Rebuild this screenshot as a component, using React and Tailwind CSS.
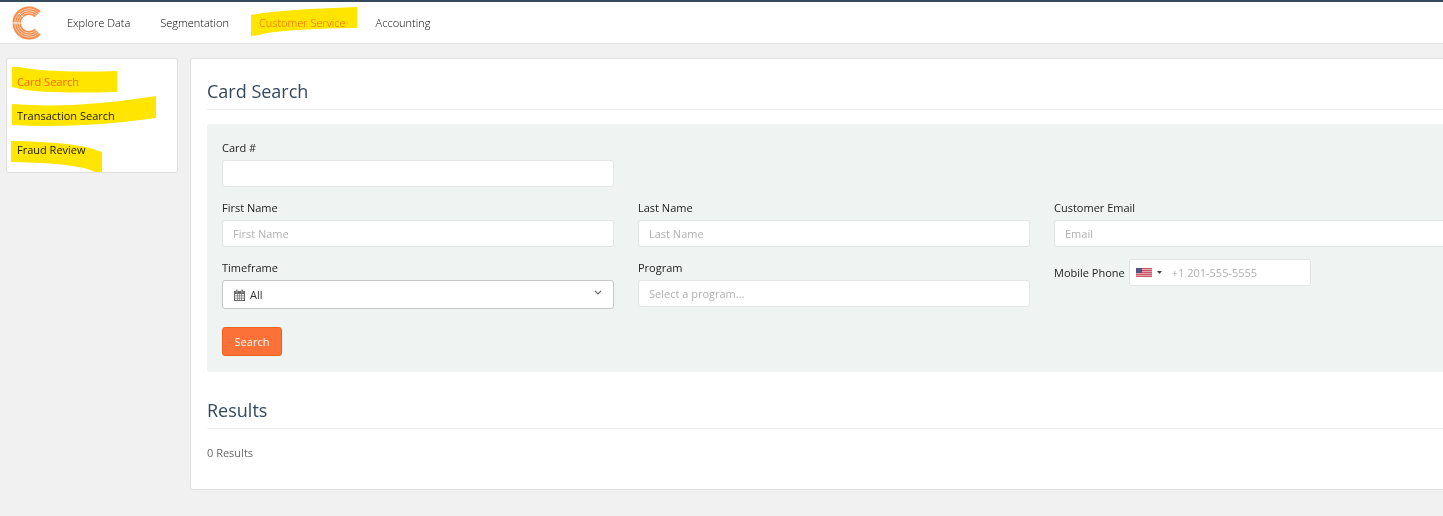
import React from "react";

const marker = "pointer-events-none absolute mix-blend-multiply";

function Logo() {
  const arc = (r) => {
    const d = r * Math.SQRT1_2;
    return `M${17 + d} ${17 - d}A${r} ${r} 0 1 0 ${17 + d} ${17 + d}`;
  };
  return (
    <svg viewBox="0 0 34 34" className="size-[34px]" fill="none" aria-hidden="true">
      <path d={arc(12.3)} stroke="#f98a48" strokeWidth="8.400" />
      <path d={arc(14.3)} stroke="#fff" strokeWidth="0.6" />
      <path d={arc(12.2)} stroke="#fff" strokeWidth="0.6" />
      <path d={arc(10.1)} stroke="#fff" strokeWidth="0.6" />
      <path d="M0 17H10M7 7L11 11" stroke="#fff" strokeWidth="0.9" />
    </svg>
  );
}

function Calendar() {
  return (
    <svg viewBox="0 0 11 12" className="pointer-events-none absolute left-3 top-[9px] h-3 w-[11px]" aria-hidden="true">
      <path d="M0 2h11v10H0z" fill="#666" />
      <path d="M1 5h2v1.6H1zM3.6 5h1.6v1.6H3.6zM5.8 5h1.6v1.6H5.8zM8 5h2v1.6H8zM1 7.2h2v1.6H1zM3.6 7.2h1.6v1.6H3.6zM5.8 7.2h1.6v1.6H5.8zM8 7.2h2v1.6H8zM1 9.4h2V11H1zM3.6 9.4h1.6V11H3.6zM5.8 9.4h1.6V11H5.8zM8 9.4h2V11H8z" fill="#fff" />
      <path d="M2 .5h1.6v3H2zM7.4.5H9v3H7.4z" fill="#666" stroke="#fff" strokeWidth=".3" />
    </svg>
  );
}

function Flag() {
  return (
    <svg viewBox="0 0 16 9" className="h-[9px] w-4" aria-hidden="true">
      <path d="M0 0h16v9H0z" fill="#e2a3ab" />
      <path d="M0 .5h16M0 2.5h16M0 4.5h16M0 6.5h16M0 8.5h16" stroke="#cd5566" />
      <path d="M0 0h6v5H0z" fill="#535686" />
    </svg>
  );
}

const inputStyle =
  "block h-[27px] w-full rounded-[3px] border border-[#e3e4e4] bg-white px-[10px] text-[#333] placeholder:text-[#b0b0b0] outline-none";

function Field({ id, label, children }) {
  return (
    <div className="flex flex-col gap-[3px]">
      <label htmlFor={id}>{label}</label>
      {children}
    </div>
  );
}

function Heading({ children }) {
  return (
    <h2 className="border-b border-[#ececec] pb-[2px] text-[18px] leading-8 text-[#34495e]">{children}</h2>
  );
}

export default function App() {
  return (
    <div className="min-h-screen overflow-x-hidden bg-[#f1f1f1] pb-[26px] font-['Open_Sans',sans-serif] text-[11px] leading-[18px] text-[#222]">
      <header className="flex h-11 items-center border-t-2 border-b border-t-[#34495e] border-b-[#dfdfdf] bg-white pl-3">
        <a href="#home" aria-label="Home"><Logo /></a>
        <nav className="ml-[21px] flex gap-[30px] font-light text-black">
          <a href="#explore">Explore Data</a>
          <a href="#segmentation">Segmentation</a>
          <a href="#service" className="relative text-[#fb7138]">
            Customer Service
            <svg viewBox="0 0 106 30" className={`${marker} -left-2 -top-[7px] h-[30px] w-[106px]`} aria-hidden="true">
              <path d="M0 8Q22 3 106 0V21Q28 22 8 28L0 29Z" fill="#ffe500" />
            </svg>
          </a>
          <a href="#accounting">Accounting</a>
        </nav>
      </header>

      <div className="flex items-start gap-3 pl-[6px] pt-[14px]">
        <aside className="w-[172px] shrink-0 rounded-[3px] border border-[#dfdfdf] bg-white px-[10px] pt-[14px] pb-[13px]">
          <nav className="flex flex-col items-start gap-4">
            <a href="#card" className="relative text-[#fb7138]">
              Card Search
              <svg viewBox="0 0 105 28" className={`${marker} -left-[5px] -top-[7px] h-7 w-[105px]`} aria-hidden="true">
                <path d="M0 1H7Q36 7 105 5V26Q34 28 8 23L0 21Z" fill="#ffe500" />
              </svg>
            </a>
            <a href="#transaction" className="relative">
              Transaction Search
              <svg viewBox="0 0 144 32" className={`${marker} -left-[5px] -top-[11px] h-8 w-36`} aria-hidden="true">
                <path d="M0 8Q60 13 137 1L144 0V22Q66 33 0 29Z" fill="#ffe500" />
              </svg>
            </a>
            <a href="#fraud" className="relative">
              Fraud Review
              <svg viewBox="0 0 91 32" className={`${marker} -left-[6px] top-0 h-8 w-[91px]`} aria-hidden="true">
                <path d="M0 0Q64 1 85 9L91 11V31H84Q68 22 0 21Z" fill="#ffe500" />
              </svg>
            </a>
          </nav>
        </aside>

        <main className="-mr-[35px] min-w-0 flex-1 rounded-[3px] border border-[#dfdfdf] bg-white px-4 pt-4 pb-[27px]">
          <Heading>Card Search</Heading>
          <form className="mt-[14px] rounded-[3px] bg-[#eff3f2] px-[15px] pt-[15px] pb-4" onSubmit={(e) => e.preventDefault()}>
            <div className="grid grid-cols-3 gap-x-6 gap-y-3">
              <Field id="card-number" label="Card #">
                <input id="card-number" className={inputStyle} />
              </Field>
              <div className="col-span-2" />
              <Field id="first" label="First Name">
                <input id="first" placeholder="First Name" className={inputStyle} />
              </Field>
              <Field id="last" label="Last Name">
                <input id="last" placeholder="Last Name" className={inputStyle} />
              </Field>
              <Field id="email" label="Customer Email">
                <input id="email" type="email" placeholder="Email" className={inputStyle} />
              </Field>
              <Field id="timeframe" label="Timeframe">
                <div className="relative">
                  <Calendar />
                  <select id="timeframe" className="block h-[29px] w-full appearance-none rounded-[3px] border border-[#c4c7c7] bg-white pl-[27px] text-[#333]">
                    <option>All</option>
                  </select>
                  <svg viewBox="0 0 8 5" className="pointer-events-none absolute right-3 top-[10px] h-[5px] w-2" fill="none" aria-hidden="true">
                    <path d="M1 .8L4 3.8L7 .8" stroke="#666" strokeWidth="1.2" />
                  </svg>
                </div>
              </Field>
              <Field id="program" label="Program">
                <input id="program" placeholder="Select a program..." className={inputStyle} />
              </Field>
              <div className="flex items-center gap-1 self-start">
                <label htmlFor="phone">Mobile Phone</label>
                <div className="flex h-[27px] w-[182px] items-center rounded-[3px] border border-[#e3e4e4] bg-white pl-[6px]">
                  <button type="button" aria-label="Country" className="flex items-center gap-[5px]">
                    <Flag />
                    <svg viewBox="0 0 5 3" className="h-[3px] w-[5px]" aria-hidden="true">
                      <path d="M0 0h5L2.500 3z" fill="#444" />
                    </svg>
                  </button>
                  <input id="phone" type="tel" placeholder="+1 201-555-5555" className="ml-[10px] min-w-0 flex-1 outline-none placeholder:text-[#b0b0b0]" />
                </div>
              </div>
            </div>
            <button type="submit" className="mt-[18px] h-[29px] w-[60px] rounded-[3px] border border-[#f0631f] bg-[#fb7138] text-white">
              Search
            </button>
          </form>
          <div className="mt-[22px]">
            <Heading>Results</Heading>
          </div>
          <p className="mt-[15px] text-[#666]">0 Results</p>
        </main>
      </div>
    </div>
  );
}
